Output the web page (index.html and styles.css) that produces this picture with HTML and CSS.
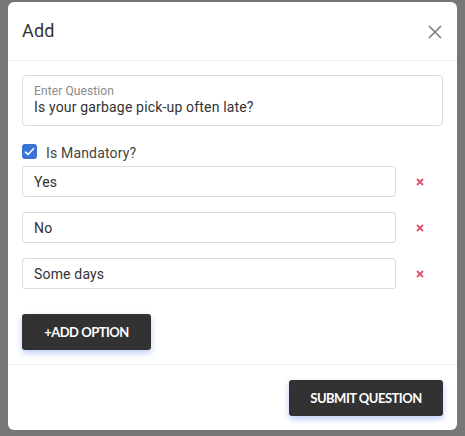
FILE: index.html
```
<!DOCTYPE html>
<html>
<head>
<meta charset="utf-8">
<link rel="stylesheet" href="styles.css">
</head>
<body>
<div class="modal">
  <div class="modal-header">
    <h2 class="title">Add</h2>
    <button class="close" aria-label="Close">
      <svg width="14" height="14" viewBox="0 0 14 14"><path d="M1 1L13 13M13 1L1 13" stroke="#7a7a7a" stroke-width="1.6" fill="none"/></svg>
    </button>
  </div>
  <div class="modal-body">
    <div class="question">
      <div class="q-label">Enter Question</div>
      <div class="q-value">Is your garbage pick-up often late?</div>
    </div>
    <label class="check-row">
      <span class="checkbox">
        <svg width="11" height="9" viewBox="0 0 11 9"><path d="M1 4.6L4 7.4L10 1.2" stroke="#fff" stroke-width="1.5" fill="none"/></svg>
      </span>
      <span class="check-label">Is Mandatory?</span>
    </label>
    <div class="options">
      <div class="option-row">
        <div class="option-input">Yes</div>
        <span class="remove"><svg width="8" height="8" viewBox="0 0 8 8"><path d="M1 1L7 7M7 1L1 7" stroke="#e44e6b" stroke-width="1.8" fill="none"/></svg></span>
      </div>
      <div class="option-row">
        <div class="option-input">No</div>
        <span class="remove"><svg width="8" height="8" viewBox="0 0 8 8"><path d="M1 1L7 7M7 1L1 7" stroke="#e44e6b" stroke-width="1.8" fill="none"/></svg></span>
      </div>
      <div class="option-row">
        <div class="option-input">Some days</div>
        <span class="remove"><svg width="8" height="8" viewBox="0 0 8 8"><path d="M1 1L7 7M7 1L1 7" stroke="#e44e6b" stroke-width="1.8" fill="none"/></svg></span>
      </div>
    </div>
    <button class="btn btn-add">+ADD OPTION</button>
  </div>
  <div class="modal-footer">
    <button class="btn btn-submit">SUBMIT QUESTION</button>
  </div>
</div>
</body>
</html>
```
FILE: styles.css
```
* { box-sizing: border-box; }
html, body { margin: 0; padding: 0; }
body {
  background: #777777;
  padding: 2px 8px 6px 8px;
  font-family: Roboto, "Liberation Sans", sans-serif;
  color: #333;
}
.modal {
  width: 449px;
  height: 428px;
  background: #fff;
  border-radius: 6px;
  display: flex;
  flex-direction: column;
}
.modal-header {
  height: 59px;
  border-bottom: 1px solid #ededed;
  display: flex;
  align-items: center;
  justify-content: space-between;
  padding: 0 14px 0 14px;
}
.title {
  margin: 0;
  font-weight: 400;
  font-size: 18px;
  color: #333;
  line-height: 22px;
  letter-spacing: 0.15px;
}
.close {
  border: 0;
  background: none;
  padding: 0;
  width: 14px;
  height: 14px;
  display: flex;
  margin-right: 1px;
  margin-top: 1px;
}
.modal-body {
  padding: 14px 14px 14px 14px;
  border-bottom: 1px solid #ededed;
}
.question {
  border: 1px solid #dcdcdc;
  border-radius: 4px;
  height: 51px;
  padding: 8px 11px 0 11px;
}
.q-label {
  font-size: 12px;
  line-height: 14px;
  color: #8a8a8a;
  letter-spacing: 0.1px;
}
.q-value {
  font-size: 14px;
  line-height: 18px;
  color: #333;
  letter-spacing: 0.17px;
}
.check-row {
  display: flex;
  align-items: center;
  margin-top: 18px;
  height: 15px;
}
.checkbox {
  width: 15px;
  height: 15px;
  border-radius: 3px;
  background: #3a73d4;
  display: flex;
  align-items: center;
  justify-content: center;
}
.check-label {
  margin-left: 9px;
  font-size: 14px;
  color: #444;
  line-height: 16px;
  padding-top: 2px;
  letter-spacing: 0.17px;
}
.options {
  margin-top: 7px;
  display: flex;
  flex-direction: column;
  gap: 15px;
}
.option-row {
  display: flex;
  align-items: center;
}
.option-input {
  width: 374px;
  height: 31px;
  border: 1px solid #dcdcdc;
  border-radius: 3px;
  padding: 1px 11px 0 11px;
  font-size: 14px;
  line-height: 29px;
  color: #333;
  letter-spacing: 0.17px;
}
.remove {
  margin-left: 20px;
  width: 8px;
  height: 8px;
  display: flex;
}
.btn {
  border: 0;
  background: #323232;
  color: #fff;
  font-family: Lato, "Open Sans", sans-serif;
  font-weight: 700;
  font-size: 13px;
  letter-spacing: -0.5px;
  height: 36px;
  border-radius: 3px;
  box-shadow: 0 3px 6px rgba(60, 110, 230, 0.35);
  display: flex;
  align-items: center;
  justify-content: center;
}
.btn-add {
  margin-top: 25px;
  width: 129px;
}
.modal-footer {
  flex: 1;
  display: flex;
  justify-content: flex-end;
  align-items: flex-start;
  padding: 15px 14px 0 14px;
}
.btn-submit {
  width: 154px;
}
```
